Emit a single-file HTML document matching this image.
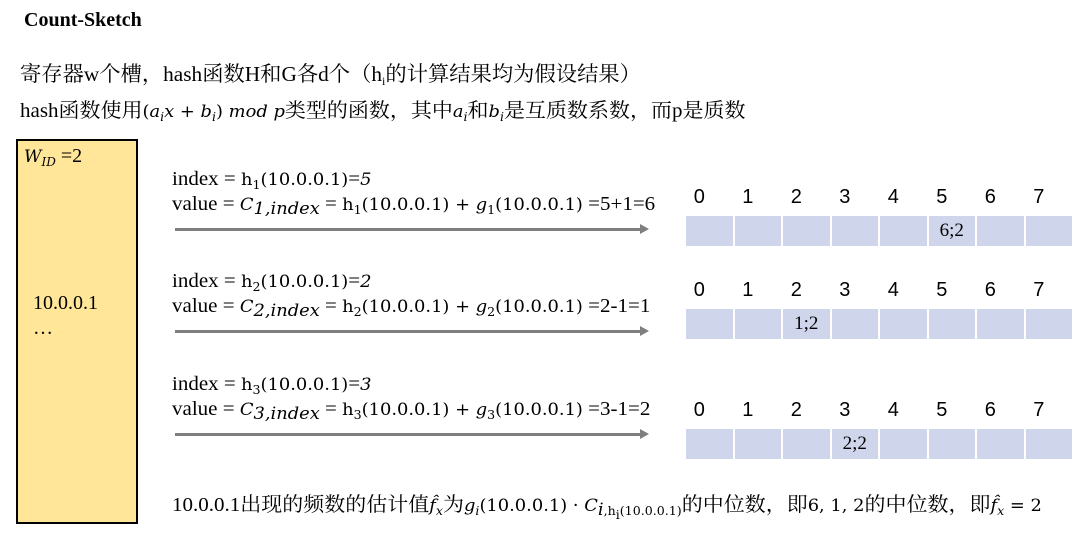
<!DOCTYPE html>
<html><head><meta charset="utf-8"><style>
body{margin:0;width:1081px;height:539px;background:#fff;position:relative;overflow:hidden;font-family:"Liberation Serif","Noto Serif CJK SC",serif;color:#000}
.a{position:absolute;white-space:nowrap;font-size:20px;line-height:1;transform-origin:0 0}
.s{transform:scaleX(1.05)}
.m{font-family:"DejaVu Serif",serif;font-size:17px}
i{font-family:"DejaVu Serif",serif;font-size:17px}
sub{font-size:12px;vertical-align:-4px;line-height:0}
.box{position:absolute;left:16px;top:139px;width:118px;height:381px;background:#FFE699;border:2px solid #000}
.arr{position:absolute;height:3px;background:#7f7f7f}
.arr:after{content:"";position:absolute;right:-8px;top:-4px;border-left:9px solid #7f7f7f;border-top:5.5px solid transparent;border-bottom:5.5px solid transparent}
.cells{position:absolute;left:686px;display:flex;gap:2px}
.cells div{width:46.5px;height:30px;background:#CFD5EA;font-size:19px;text-align:center;line-height:30px}
.nums{position:absolute;left:676px;display:flex;gap:2px;font-family:"Liberation Sans",sans-serif;font-size:20px}
.nums div{width:46.5px;text-align:center}
</style></head><body>
<div class="a" style="left:24px;top:10px;font-weight:bold;font-size:20px">Count-Sketch</div>
<div class="a" style="left:20px;top:64px;font-size:21.3px">寄存器w个槽，hash函数H和G各d个（h<sub>i</sub>的计算结果均为假设结果）</div>
<div class="a s" style="left:20px;top:101px">hash函数使用<span class="m">(<i>a<sub>i</sub>x</i> + <i>b<sub>i</sub></i>) <i>mod p</i></span>类型的函数，其中<i>a<sub>i</sub></i>和<i>b<sub>i</sub></i>是互质数系数，而p是质数</div>
<div class="box"></div>
<div class="a" style="left:24px;top:146px"><i>W<sub>ID</sub></i> =2</div>
<div class="a" style="left:33px;top:293px">10.0.0.1</div>
<div class="a" style="left:33px;top:318px">…</div>

<div class="a s" style="left:172px;top:169px">index = <span class="m">h<sub>1</sub>(10.0.0.1)</span>=<i>5</i></div>
<div class="a s" style="left:172px;top:194px">value = <i>C</i><sub><i>1,index</i></sub> = <span class="m">h<sub>1</sub>(10.0.0.1) + <i>g</i><sub>1</sub>(10.0.0.1)</span> =5+1=6</div>
<div class="arr" style="left:175px;top:228px;width:466px"></div>
<div class="nums" style="top:186px"><div>0</div><div>1</div><div>2</div><div>3</div><div>4</div><div>5</div><div>6</div><div>7</div></div>
<div class="cells" style="top:216px"><div></div><div></div><div></div><div></div><div></div><div>6;2</div><div></div><div></div></div>

<div class="a s" style="left:172px;top:271px">index = <span class="m">h<sub>2</sub>(10.0.0.1)</span>=<i>2</i></div>
<div class="a s" style="left:172px;top:296px">value = <i>C</i><sub><i>2,index</i></sub> = <span class="m">h<sub>2</sub>(10.0.0.1) + <i>g</i><sub>2</sub>(10.0.0.1)</span> =2-1=1</div>
<div class="arr" style="left:175px;top:330px;width:466px"></div>
<div class="nums" style="top:279px"><div>0</div><div>1</div><div>2</div><div>3</div><div>4</div><div>5</div><div>6</div><div>7</div></div>
<div class="cells" style="top:309px"><div></div><div></div><div>1;2</div><div></div><div></div><div></div><div></div><div></div></div>

<div class="a s" style="left:172px;top:374px">index = <span class="m">h<sub>3</sub>(10.0.0.1)</span>=<i>3</i></div>
<div class="a s" style="left:172px;top:399px">value = <i>C</i><sub><i>3,index</i></sub> = <span class="m">h<sub>3</sub>(10.0.0.1) + <i>g</i><sub>3</sub>(10.0.0.1)</span> =3-1=2</div>
<div class="arr" style="left:175px;top:433px;width:466px"></div>
<div class="nums" style="top:399px"><div>0</div><div>1</div><div>2</div><div>3</div><div>4</div><div>5</div><div>6</div><div>7</div></div>
<div class="cells" style="top:429px"><div></div><div></div><div></div><div>2;2</div><div></div><div></div><div></div><div></div></div>

<div class="a s" style="left:172px;top:495px">10.0.0.1出现的频数的估计值<i>f̂<sub>x</sub></i>为<span class="m"><i>g<sub>i</sub></i>(10.0.0.1) · <i>C</i><sub><i>i</i>,h<sub>i</sub>(10.0.0.1)</sub></span>的中位数，即<span class="m">6, 1, 2</span>的中位数，即<span class="m"><i>f̂<sub>x</sub></i> = 2</span></div>
</body></html>
